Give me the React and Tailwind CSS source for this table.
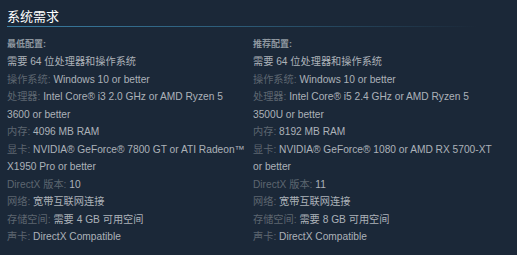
import React from "react";

const minimum = [
    ["操作系统", "Windows 10 or better"],
    ["处理器", "Intel Core® i3 2.0 GHz or AMD Ryzen 5 3600 or better"],
    ["内存", "4096 MB RAM"],
    ["显卡", "NVIDIA® GeForce® 7800 GT or ATI Radeon™ X1950 Pro or better"],
    ["DirectX 版本", "10"],
    ["网络", "宽带互联网连接"],
    ["存储空间", "需要 4 GB 可用空间"],
    ["声卡", "DirectX Compatible"],
];

const recommended = [
    ["操作系统", "Windows 10 or better"],
    ["处理器", "Intel Core® i5 2.4 GHz or AMD Ryzen 5 3500U or better"],
    ["内存", "8192 MB RAM"],
    ["显卡", "NVIDIA® GeForce® 1080 or AMD RX 5700-XT or better"],
    ["DirectX 版本", "11"],
    ["网络", "宽带互联网连接"],
    ["存储空间", "需要 8 GB 可用空间"],
    ["声卡", "DirectX Compatible"],
];

const ReqColumn = ({ title, rows, className }) => (
    <div className={className}>
        <p className="text-[9px] font-bold text-[#8f98a0] leading-[14px]">{title}</p>
        <ul className="mt-[2px] text-[10.2px] leading-[17.5px] text-[#acb2b8]">
            <li>需要 64 位处理器和操作系统</li>
            {rows.map(([label, value]) => (
                <li key={label}>
                    <span className="text-[#5d6670]">{label}:</span> {value}
                </li>
            ))}
        </ul>
    </div>
);

const App = () => {
    return (
        <div
            className="w-[517px] h-[255px] bg-[#1b2838] pt-[8px] px-[7px]"
            style={{ fontFamily: '"Liberation Sans", Arial, "Noto Sans CJK SC", sans-serif' }}
        >
            <h2 className="text-[13px] leading-[17px] text-white pb-[1px]">系统需求</h2>
            <div className="h-px bg-gradient-to-r from-[#3a7ea3] via-[#2c5a76] to-transparent w-[470px]"></div>
            <div className="flex gap-[7px] pt-[10px]">
                <ReqColumn className="w-[239px] shrink-0" title="最低配置:" rows={minimum} />
                <ReqColumn className="w-[248px] shrink-0" title="推荐配置:" rows={recommended} />
            </div>
        </div>
    );
};

export default App;
